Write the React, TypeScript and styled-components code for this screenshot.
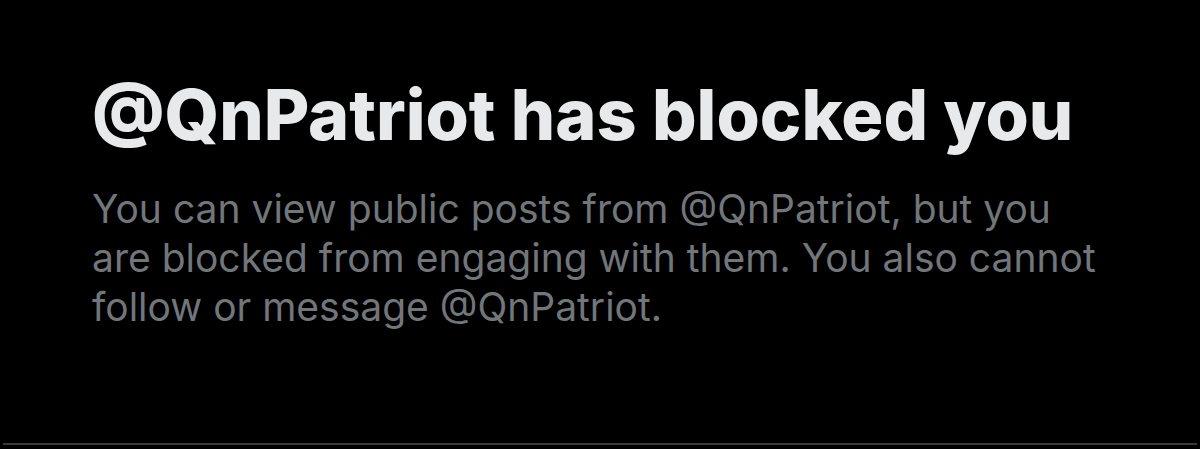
import React from "react";
import styled, { createGlobalStyle } from "styled-components";

const Global = createGlobalStyle`
  html, body { margin: 0; padding: 0; background: #000; }
  body { font-family: Inter, "Noto Sans", sans-serif; }
`;

const Screen = styled.div`
  width: 1200px;
  height: 449px;
  background: #000;
  box-sizing: border-box;
  display: flex;
  flex-direction: column;
  justify-content: flex-end;
  padding: 0 3px 4px 3px;
`;

const Content = styled.div`
  flex: 1;
  display: flex;
  flex-direction: column;
  padding: 75px 0 0 89px;
`;

const Title = styled.h1`
  margin: 0;
  font-family: Inter, "Noto Sans", sans-serif;
  font-weight: 800;
  font-size: 70px;
  line-height: 80px;
  color: #e7e9ea;
  letter-spacing: 0;
`;

const Body = styled.p`
  margin: 29px 0 0 0;
  font-family: Inter, "Noto Sans", sans-serif;
  font-weight: 400;
  font-size: 39px;
  line-height: 49px;
  color: #71767b;
`;

const Line = styled.span`
  display: block;
  white-space: nowrap;
`;

const Divider = styled.div`
  height: 2px;
  background: #3a3b3f;
`;

export default function App() {
  return (
    <>
      <Global />
      <Screen>
        <Content>
          <Title>@QnPatriot has blocked you</Title>
          <Body>
            <Line>You can view public posts from @QnPatriot, but you</Line>
            <Line>are blocked from engaging with them. You also cannot</Line>
            <Line>follow or message @QnPatriot.</Line>
          </Body>
        </Content>
        <Divider />
      </Screen>
    </>
  );
}
